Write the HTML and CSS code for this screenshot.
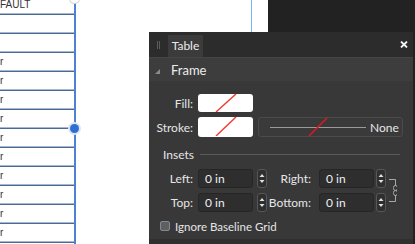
FILE: index.html
```html
<!DOCTYPE html>
<html>
<head>
    <meta charset="UTF-8">
    <title>Table</title>
    <link rel="stylesheet" href="styles.css">
</head>
<body>
<div class="screen">
    <div class="doc">
        <div class="table">
            <div class="row"><span>FAULT</span></div>
            <div class="row"></div>
            <div class="row"></div>
            <div class="row"><span>r</span></div>
            <div class="row"><span>r</span></div>
            <div class="row"><span>r</span></div>
            <div class="row"><span>r</span></div>
            <div class="row"><span>r</span></div>
            <div class="row"><span>r</span></div>
            <div class="row"><span>r</span></div>
            <div class="row"><span>r</span></div>
            <div class="row"><span>r</span></div>
            <div class="row"><span>r</span></div>
        </div>
        <div class="guide"></div>
    </div>
    <div class="pasteboard"></div>

    <span class="handle handle-top"></span>
    <span class="handle"></span>

    <!-- floating studio panel -->
    <section class="panel">
        <div class="panel-tabs">
            <span class="grip"></span>
            <span class="tab">Table</span>
            <svg class="close" width="8" height="7" viewBox="0 0 8 7">
                <path d="M1 0.5 L7 6.5 M7 0.5 L1 6.5" stroke="#f2f2f2" stroke-width="1.8"/>
            </svg>
        </div>

        <div class="section-head">
            <svg class="twisty" width="5" height="5" viewBox="0 0 5 5"><path d="M5 0 V5 H0 Z" fill="#8a8a8a"/></svg>
            <span>Frame</span>
        </div>

        <div class="section-body">
            <div class="field fill-row">
                <label class="label">Fill:</label>
                <span class="swatch">
                    <svg width="55" height="18" viewBox="0 0 55 18"><path d="M18 18 L38 0" stroke="#f03a2e" stroke-width="1.4"/></svg>
                </span>
            </div>
            <div class="field stroke-row">
                <label class="label">Stroke:</label>
                <span class="swatch">
                    <svg width="55" height="19" viewBox="0 0 55 19"><path d="M18 19 L38 0" stroke="#f03a2e" stroke-width="1.4"/></svg>
                </span>
                <span class="stroke-style">
                    <svg width="98" height="20" viewBox="0 0 98 20">
                        <path d="M0 10.5 H96" stroke="#9a9a9a" stroke-width="1"/>
                        <path d="M39 19 L57 1" stroke="#e8141c" stroke-width="1.4"/>
                    </svg>
                    <span>None</span>
                </span>
            </div>

            <div class="group-head">
                <span>Insets</span>
                <span class="rule"></span>
            </div>

            <div class="insets">
                <label class="label">Left:</label>
                <span class="input">0 in</span>
                <span class="spin"><svg width="10" height="19" viewBox="0 0 10 19"><path d="M2.5 8 L5 5 L7.5 8 Z M2.5 11 L5 14 L7.5 11 Z" fill="#e0e0e0"/></svg></span>
                <label class="label">Right:</label>
                <span class="input">0 in</span>
                <span class="spin"><svg width="10" height="19" viewBox="0 0 10 19"><path d="M2.5 8 L5 5 L7.5 8 Z M2.5 11 L5 14 L7.5 11 Z" fill="#e0e0e0"/></svg></span>
                <svg class="chain" width="8" height="23" viewBox="0 0 8 23">
                    <path d="M0 0.5 H6.5 V7 M6.5 16 V22.5 H0" stroke="#a8a8a8" fill="none"/>
                    <rect x="4.5" y="6.5" width="4" height="5" rx="2" stroke="#a8a8a8" fill="none"/>
                    <rect x="4.5" y="11.5" width="4" height="5" rx="2" stroke="#a8a8a8" fill="none"/>
                </svg>

                <label class="label">Top:</label>
                <span class="input">0 in</span>
                <span class="spin"><svg width="10" height="19" viewBox="0 0 10 19"><path d="M2.5 8 L5 5 L7.5 8 Z M2.5 11 L5 14 L7.5 11 Z" fill="#e0e0e0"/></svg></span>
                <label class="label">Bottom:</label>
                <span class="input">0 in</span>
                <span class="spin"><svg width="10" height="19" viewBox="0 0 10 19"><path d="M2.5 8 L5 5 L7.5 8 Z M2.5 11 L5 14 L7.5 11 Z" fill="#e0e0e0"/></svg></span>
            </div>

            <div class="check-row">
                <span class="checkbox"></span>
                <span>Ignore Baseline Grid</span>
            </div>
        </div>
        <div class="panel-foot"></div>
    </section>
</div>
</body>
</html>
```

FILE: styles.css
```css
html, body{
    margin: 0;
    padding: 0;
}

body{
    width: 415px;
    height: 244px;
    overflow: hidden;
    font: 12px Lato, "Liberation Sans", sans-serif;
    color: #e6e6e6;
}

.screen{
    position: relative;
    display: flex;
    width: 415px;
    height: 244px;
    overflow: hidden;
}

/* document canvas */
.doc{
    display: flex;
    width: 268px;
    background: #fff;
}

.table{
    width: 74px;
    margin-top: -4px;
    border-right: 2px solid #4b82d3;
}
.table .row{
    height: 19px;
    font: 10px "Liberation Sans", Arial, sans-serif;
    color: #333;
    background: linear-gradient(to bottom, transparent 17px, #aab8cd 17px, #aab8cd 18px, #4b6897 18px);
}
.table .row span{
    display: block;
    line-height: 17px;
}

.guide{
    width: 1px;
    margin-left: 175px;
    background: #76b6ef;
}

.pasteboard{
    flex: 1;
    background: #222;
}

.handle{
    position: absolute;
    left: 70px;
    top: 124px;
    width: 9px;
    height: 9px;
    border-radius: 50%;
    background: #2c6fd8;
    box-shadow: 0 0 0 2px #e3e5ea;
}
.handle-top{
    top: -6px;
    background: #fff;
    box-shadow: 0 0 0 1px #d6d6d6;
}

/* studio panel */
.panel{
    position: absolute;
    left: 149px;
    top: 32px;
    width: 264px;
    height: 212px;
    display: flex;
    flex-direction: column;
    background: #383838;
}

.panel-tabs{
    display: flex;
    align-items: flex-end;
    height: 25px;
    padding-left: 8px;
    background: #2c2c2c;
}
.grip{
    align-self: center;
    width: 1px;
    height: 8px;
    border-left: 1px solid #5c5c5c;
    border-right: 1px solid #5c5c5c;
}
.tab{
    width: 35px;
    height: 22px;
    margin-left: 8px;
    line-height: 21px;
    text-align: center;
    background: #3b3b3b;
    color: #ececec;
}
.close{
    align-self: center;
    margin-left: auto;
    margin-right: 5px;
}

.section-head{
    display: flex;
    align-items: center;
    height: 23px;
    padding-left: 6px;
    border-top: 1px solid #454545;
    background: #3d3d3d;
    font-size: 13px;
    color: #ececec;
}
.twisty{
    margin-top: 3px;
    margin-right: 11px;
}

.section-body{
    flex: 1;
    padding-top: 13px;
}

.field{
    display: flex;
    align-items: center;
}
.label{
    width: 44px;
    text-align: right;
}
.fill-row{
    height: 18px;
}
.stroke-row{
    height: 20px;
    margin-top: 5px;
}

.swatch{
    display: block;
    width: 55px;
    height: 100%;
    margin-left: 5px;
    border-radius: 3px;
    background: #fff;
    overflow: hidden;
}
.swatch svg{
    display: block;
}

.stroke-style{
    display: flex;
    align-items: center;
    box-sizing: border-box;
    width: 145px;
    height: 20px;
    margin-left: 5px;
    padding-left: 11px;
    border: 1px solid #4b4b4b;
    border-radius: 3px;
    background: #3a3a3a;
}
.stroke-style span{
    margin-left: 2px;
}

.group-head{
    display: flex;
    align-items: center;
    height: 12px;
    margin-top: 11px;
    padding-left: 14px;
}
.group-head .rule{
    flex: 1;
    height: 1px;
    margin-left: 6px;
    margin-right: 13px;
    background: #5a5a5a;
}

.insets{
    display: grid;
    grid-template-columns: 44px 60px 14px 46px 61px 12px 11px;
    grid-template-rows: 19px 19px;
    row-gap: 5px;
    align-items: center;
    margin-top: 9px;
}
.input{
    justify-self: end;
    box-sizing: border-box;
    width: 55px;
    height: 19px;
    padding-left: 6px;
    line-height: 17px;
    border: 1px solid #262626;
    border-radius: 3px;
    background: #2e2e2e;
    color: #f0f0f0;
}
.spin{
    justify-self: end;
    box-sizing: border-box;
    width: 10px;
    height: 19px;
    border: 1px solid #575757;
    border-radius: 3px;
    background: #2f2f2f;
}
.spin svg{
    display: block;
    margin: -1px 0 0 -1px;
}
.chain{
    grid-column: 7;
    grid-row: 1 / 3;
    justify-self: end;
}

.check-row{
    display: flex;
    align-items: center;
    height: 10px;
    margin-top: 9px;
    padding-left: 11px;
    font-size: 11.5px;
}
.checkbox{
    box-sizing: border-box;
    width: 10px;
    height: 10px;
    margin-right: 5px;
    border: 1px solid #7f8894;
    border-radius: 2px;
    background: #5f5f5f;
}

.panel-foot{
    height: 5px;
    background: #303030;
}
```
